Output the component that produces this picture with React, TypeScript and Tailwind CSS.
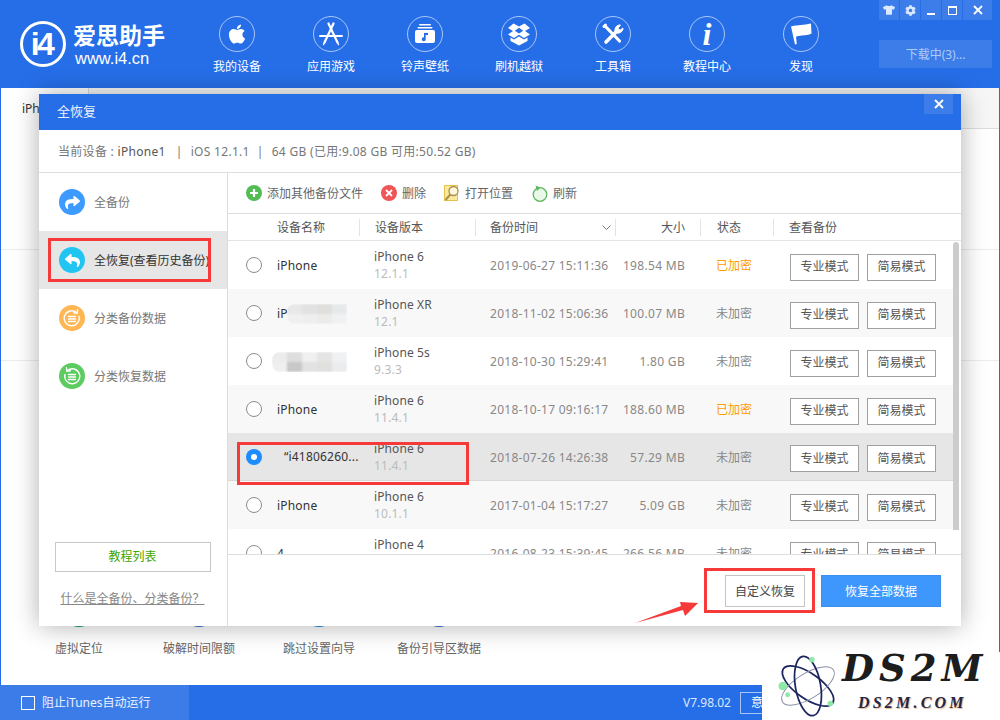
import { FaApple, FaCog, FaReply, FaShare, FaTshirt } from "react-icons/fa";

const font = { fontFamily: '"Noto Sans", "Noto Sans CJK SC", sans-serif' };

const navItems = [
  { label: "我的设备", icon: <FaApple size={22} /> },
  {
    label: "应用游戏",
    icon: (
      <svg width="24" height="24" viewBox="0 0 24 24" stroke="white" fill="none" strokeLinecap="round">
        <path d="M14.500 1.500 5.500 20.500" strokeWidth="2.200" />
        <path d="M9.500 1.500 18.500 20.500" strokeWidth="2.200" />
        <path d="M1 14h22" strokeWidth="2" />
        <path d="M4.500 22.500 5.500 20.500M19.500 22.500 18.500 20.500" strokeWidth="1.400" />
      </svg>
    ),
  },
  {
    label: "铃声壁纸",
    icon: (
      <svg width="22" height="22" viewBox="0 0 22 22" fill="white">
        <rect x="5" y="1" width="12" height="1.600" rx=".8" />
        <rect x="3.500" y="4" width="15" height="1.600" rx=".8" />
        <path d="M3 7h16a2 2 0 0 1 2 2v9a2 2 0 0 1-2 2H3a2 2 0 0 1-2-2V9a2 2 0 0 1 2-2Z" />
        <path d="M10 10h4v2h-2.300v4.200a2 2 0 1 1-1.700-1.900Z" fill="#266ee8" />
      </svg>
    ),
  },
  {
    label: "刷机越狱",
    icon: (
      <svg width="24" height="24" viewBox="0 0 24 24" fill="white">
        <path
          fillRule="evenodd"
          d="M6.500 1.500 12 4.500 17.500 1.500 23 6 18 9 23 12.500 17 16 12 12.800 7 16 1 12.500 6 9 1 6ZM12 5.800 7.800 8.800 12 11.500 16.200 8.800Z"
        />
        <path d="M3.500 15.500 7 17.500 12 14.500 17 17.500 20.500 15.500V19L12 23.500 3.500 19Z" />
      </svg>
    ),
  },
  {
    label: "工具箱",
    icon: (
      <svg width="24" height="24" viewBox="0 0 24 24" fill="none" stroke="white" strokeLinecap="round">
        <path d="M5 5 18.500 19" strokeWidth="3.200" />
        <path d="M3 4.500 4.500 3" strokeWidth="3" />
        <path d="M5 20 15 10" strokeWidth="3.600" />
        <path d="M14.200 9.800A5 5 0 0 1 19.500 3L17 6.200 19 8.300 22 6A5 5 0 0 1 15 10.800" fill="white" strokeWidth="1" />
      </svg>
    ),
  },
  {
    label: "教程中心",
    icon: (
      <span className="text-[32px] leading-none font-bold italic" style={{ fontFamily: '"Liberation Serif", serif' }}>
        i
      </span>
    ),
  },
  {
    label: "发现",
    icon: (
      <svg width="22" height="24" viewBox="0 0 22 24" fill="white">
        <path d="M1 4.500C5 3 8 3.500 11 3c3-.5 6-.5 10-1.500l.5 10c-3 1.500-6 1.800-9.500 2-2.500.2-4.500.5-6 1.200L6.800 22 5 22.500Z" />
      </svg>
    ),
  },
];

const rows = [
  { name: "iPhone", model: "iPhone 6", ios: "12.1.1", time: "2019-06-27 15:11:36", size: "198.54 MB", locked: true, bg: "bg-white" },
  { name: "iP'", blur: "short", model: "iPhone XR", ios: "12.1", time: "2018-11-02 15:06:36", size: "100.07 MB", bg: "bg-[#f8f8f8]" },
  { name: "", blur: "long", model: "iPhone 5s", ios: "9.3.3", time: "2018-10-30 15:29:41", size: "1.80 GB", bg: "bg-white" },
  { name: "iPhone", model: "iPhone 6", ios: "11.4.1", time: "2018-10-17 09:16:17", size: "188.60 MB", locked: true, bg: "bg-[#f8f8f8]" },
  { name: "“i41806260...", model: "iPhone 6", ios: "11.4.1", time: "2018-07-26 14:26:38", size: "57.29 MB", selected: true, bg: "bg-[#e6e6e6] border-b border-[#d8d8d8]" },
  { name: "iPhone", model: "iPhone 6", ios: "10.1.1", time: "2017-01-04 15:17:27", size: "5.09 GB", bg: "bg-[#f8f8f8]" },
  { name: "4", model: "iPhone 4", ios: "7.1.2", time: "2016-08-23 15:39:45", size: "266.56 MB", bg: "bg-white" },
];

const bottomTools = [
  { label: "虚拟定位", color: "bg-[#14a85c]" },
  { label: "破解时间限额", color: "bg-[#4070cc]" },
  { label: "跳过设置向导", color: "bg-[#2a8ee0]" },
  { label: "备份引导区数据", color: "bg-[#3a6fd8]" },
];

function LinesIcon({ reverse }: { reverse?: boolean }) {
  return (
    <svg width="18" height="18" viewBox="0 0 18 18" fill="none" stroke="white" strokeWidth="1.400" strokeLinecap="round">
      {reverse ? <path d="M4.500 3.500A7.500 7.500 0 1 1 2 7.500" /> : <path d="M13.500 3.500A7.500 7.500 0 1 0 16 7.500" />}
      {reverse ? <path d="M3.500 .8 3.800 4.200 7.300 3.800" /> : <path d="M14.500 .8 14.200 4.200 10.700 3.800" />}
      <path d="M5.500 7.500h7M5.500 10h7M5.500 12.500h7" />
    </svg>
  );
}

const sideItems = [
  { label: "全备份", color: "bg-[#3d9bff]", icon: <FaShare size={15} color="white" /> },
  { label: "全恢复(查看历史备份)", color: "bg-[#22c5f2]", icon: <FaReply size={15} color="white" />, active: true },
  { label: "分类备份数据", color: "bg-[#ffb655]", icon: <LinesIcon /> },
  { label: "分类恢复数据", color: "bg-[#5ccb60]", icon: <LinesIcon reverse /> },
];

function Mosaic({ cells }: { cells: string[][] }) {
  return (
    <div className="flex flex-col blur-[1px]">
      {cells.map((line, i) => (
        <div key={i} className="flex">
          {line.map((c, j) => (
            <div key={j} className="w-[15px] h-[10px]" style={{ background: c }} />
          ))}
        </div>
      ))}
    </div>
  );
}

function WindowButton({ children, wide }: { children: React.ReactNode; wide?: boolean }) {
  return <div className={`h-5 flex items-center justify-center bg-white/10 text-white ${wide ? "w-[29px]" : "w-5"}`}>{children}</div>;
}

function Row({ row }: { row: (typeof rows)[number] }) {
  return (
    <div className={`h-12 flex items-center text-xs shrink-0 ${row.bg}`}>
      <div className="w-[49px] flex justify-center pl-[3px]">
        {row.selected ? (
          <div className="w-4 h-4 rounded-full bg-[#1c8cff] flex items-center justify-center">
            <div className="w-[6px] h-[6px] rounded-full bg-white" />
          </div>
        ) : (
          <div className="w-4 h-4 rounded-full border border-[#8c8c8c] bg-white" />
        )}
      </div>
      <div className={`w-[97px] text-[#333] flex items-center pt-px ${row.selected ? "pl-[7px]" : ""}`}>
        <span className="tracking-[0.2px]">{row.name}</span>
        {row.blur === "short" && (
          <div className="-ml-[4px] rounded-l-lg overflow-hidden">
            <Mosaic
              cells={[
                ["#e8e8e8", "#e2e2e2", "#e0dfde", "#e6e9ea"],
                ["#f0f0f0", "#eeeeee", "#ecebea", "#f0f1f3"],
              ]}
            />
          </div>
        )}
        {row.blur === "long" && (
          <div className="-ml-[5px] rounded-l-lg overflow-hidden">
            <Mosaic
              cells={[
                ["#ececec", "#dedede", "#f0f0f0", "#e4e4e4", "#f0f1f2"],
                ["#efefef", "#c8c8c8", "#e2e2e2", "#e2e0de", "#ebeced"],
              ]}
            />
          </div>
        )}
      </div>
      <div className="w-[116px] leading-[17px]">
        <div className="text-[#555] tracking-[0.1px]">{row.model}</div>
        <div className="text-[#bbb] tracking-[0.2px]">{row.ios}</div>
      </div>
      <div className="w-[125px] text-[#888] tracking-[0.27px] pt-[2px]">{row.time}</div>
      <div className="w-[70px] text-right text-[#888] tracking-[0.3px] pt-[2px]">{row.size}</div>
      <div className={`w-[74px] ml-[31px] pt-[2px] ${row.locked ? "text-[#ff9c00]" : "text-[#888]"}`}>{row.locked ? "已加密" : "未加密"}</div>
      <div className="flex gap-2 mt-[4px]">
        <button className="w-[69px] h-[27px] border border-[#a0a0a0] bg-white text-[#555]">专业模式</button>
        <button className="w-[69px] h-[27px] border border-[#a0a0a0] bg-white text-[#555]">简易模式</button>
      </div>
    </div>
  );
}

function HeaderCell({ width, label, sep = true, children }: { width: string; label: string; sep?: boolean; children?: React.ReactNode }) {
  return (
    <div className={`${width} flex items-center h-[17px] ${sep ? "border-r border-[#e4e4e4]" : ""}`}>
      <span className="pt-[2px]">{label}</span>
      {children}
    </div>
  );
}

export default function App() {
  return (
    <div className="relative w-[1000px] h-[720px] overflow-hidden bg-white flex flex-col text-xs" style={font}>
      {/* Header */}
      <header className="h-[88px] bg-[#266ee8] shrink-0 flex text-white relative">
        <div className="w-[189px] pl-5 pt-[21px] flex gap-[7px]">
          <div className="w-[46px] h-[46px] rounded-full border-[3px] border-white flex items-center justify-center overflow-hidden">
            <span className="text-[32px] font-bold leading-none tracking-[-2.500px] pr-[3px]" style={{ fontFamily: '"Liberation Sans", sans-serif' }}>
              i4
            </span>
          </div>
          <div className="flex flex-col pt-[1px]">
            <span className="text-[23px] leading-[27px] font-bold whitespace-nowrap">爱思助手</span>
            <span className="text-[16.500px] leading-[18px] pl-[2px]" style={{ fontFamily: '"Liberation Sans", sans-serif' }}>
              www.i4.cn
            </span>
          </div>
        </div>
        <nav className="flex pl-[1px] pt-[11px] h-[76px]">
          {navItems.map((item) => (
            <div key={item.label} className={`w-[94px] h-[65px] flex flex-col items-center pt-[5px] ${item.active ? "bg-white/10" : ""}`}>
              <div className="w-9 h-9 rounded-full border border-white/60 flex items-center justify-center">{item.icon}</div>
              <div className="mt-[6px] leading-[18px]">{item.label}</div>
            </div>
          ))}
        </nav>
        <div className="ml-auto mr-2 w-[113px] flex flex-col">
          <div className="flex gap-px">
            <WindowButton>
              <FaTshirt size={12} className="text-[#dbe8ff]" />
            </WindowButton>
            <WindowButton>
              <FaCog size={11} className="text-[#dbe8ff]" />
            </WindowButton>
            <WindowButton>
              <div className="w-2 h-[2px] bg-white mt-[7px]" />
            </WindowButton>
            <WindowButton>
              <div className="w-[9px] h-[9px] border border-white border-t-2" />
            </WindowButton>
            <WindowButton wide>
              <svg width="10" height="10" viewBox="0 0 10 10" stroke="white" strokeWidth="1.800">
                <path d="M1 1 9 9M9 1 1 9" />
              </svg>
            </WindowButton>
          </div>
          <div className="mt-5 h-7 bg-white/10 flex items-center justify-center text-white/60 pt-[2px]">下载中(3)...</div>
        </div>
      </header>

      {/* Tool page behind the dialog */}
      <main className="flex-1 flex flex-col border-x border-[#266ee8] min-h-0">
        <div className="h-[41px] bg-[#f6f6f6] border-b border-[#dcdcdc] shrink-0 flex">
          <div className="w-[88px] h-[41px] bg-white border-r border-[#dcdcdc] pl-[21px] pt-[13px] text-[#333]">iPhone</div>
        </div>
        <div className="h-[121px] border-b border-[#ececec] shrink-0" />
        <div className="h-[111px] border-b border-[#ececec] shrink-0" />
        <div className="flex pl-[18px] pt-[234px]">
          {bottomTools.map((tool) => (
            <div key={tool.label} className="w-[120px] flex flex-col items-center text-[#666]">
              <div className={`w-8 h-8 rounded-full ${tool.color}`} />
              <div className="mt-[14px] whitespace-nowrap">{tool.label}</div>
            </div>
          ))}
        </div>
      </main>

      {/* Status bar */}
      <footer className="h-[35px] bg-[#266ee8] shrink-0 flex items-center text-white">
        <div className="w-[189px] h-full bg-[#3b7ce9] flex items-center pl-[21px] gap-[7px]">
          <div className="w-[14px] h-[14px] border border-white" />
          <span className="text-white/90 pt-px">阻止iTunes自动运行</span>
        </div>
        <span className="ml-[494px] text-[#dce8ff] pt-px">V7.98.02</span>
        <div className="ml-[9px] w-[60px] h-[22px] border border-white/60 pl-[10px] leading-[20px] shrink-0">意见反馈</div>
      </footer>

      {/* Dialog */}
      <div className="absolute left-[39px] top-[94px] w-[922px] h-[532px] bg-white flex flex-col shadow-[0_0_24px_rgba(0,0,0,0.32)]">
        <div className="h-9 bg-[#266ee8] shrink-0 flex items-center pl-[18px] text-[#eaf1ff] relative">
          <span className="text-[13px]">全恢复</span>
          <div className="absolute right-2 top-0 w-[29px] h-5 bg-white/10 flex items-center justify-center">
            <svg width="10" height="10" viewBox="0 0 10 10" stroke="white" strokeWidth="1.800">
              <path d="M1 1 9 9M9 1 1 9" />
            </svg>
          </div>
        </div>
        <div className="h-[43px] shrink-0 border-b border-[#dedede] flex items-center pl-[19px] pt-px text-[#777] whitespace-pre tracking-[0.3px]">
          <span>当前设备 : </span>
          <span className="text-[#555]">iPhone1</span>
          <span className="ml-[10px] mr-[8px]">|</span>
          <span>iOS 12.1.1</span>
          <span className="ml-[7px] mr-[8px]">|</span>
          <span>64 GB (已用:9.08 GB 可用:50.52 GB)</span>
        </div>
        <div className="flex-1 flex min-h-0">
          {/* Sidebar */}
          <aside className="w-[189px] shrink-0 border-r border-[#dcdcdc] flex flex-col">
            {sideItems.map((item) => (
              <div key={item.label} className={`h-[58px] flex items-center pl-5 gap-[9px] ${item.active ? "bg-[#e6e6e6] text-[#333]" : "text-[#777]"}`}>
                <div className={`w-[26px] h-[26px] rounded-full flex items-center justify-center shrink-0 ${item.color}`}>{item.icon}</div>
                <span className="whitespace-nowrap pt-[2px]">{item.label}</span>
              </div>
            ))}
            <div className="mt-auto flex flex-col items-center pb-[19px] pr-px">
              <button className="w-[156px] h-[30px] border border-[#c8c8c8] text-[#3fa500]">教程列表</button>
              <a className="mt-[19px] text-[#888] underline">什么是全备份、分类备份？</a>
            </div>
          </aside>

          {/* Backup list */}
          <section className="flex-1 flex flex-col min-w-0">
            <div className="h-[41px] shrink-0 border-b border-[#dedede] flex items-center pl-[18px] text-[#666]">
              <div className="w-4 h-4 rounded-full bg-[#55bb55] flex items-center justify-center mr-[5px]">
                <svg width="10" height="10" viewBox="0 0 10 10" stroke="white" strokeWidth="2.200">
                  <path d="M5 1v8M1 5h8" />
                </svg>
              </div>
              <span className="pt-[2px]">添加其他备份文件</span>
              <div className="w-4 h-4 rounded-full bg-[#f05555] flex items-center justify-center ml-[18px] mr-[5px]">
                <svg width="8" height="8" viewBox="0 0 8 8" stroke="white" strokeWidth="1.800">
                  <path d="M1 1 7 7M7 1 1 7" />
                </svg>
              </div>
              <span className="pt-[2px]">删除</span>
              <svg className="ml-[18px] mr-[5px]" width="16" height="16" viewBox="0 0 16 16">
                <rect x=".5" y=".5" width="13" height="15" fill="#fbe9a0" stroke="#e6c24a" />
                <circle cx="9.500" cy="6" r="4.500" fill="#fff8dc" stroke="#a88f4a" strokeWidth="1.300" />
                <path d="M6.300 9.500 1.500 15" stroke="#a88f4a" strokeWidth="2" />
              </svg>
              <span className="pt-[2px]">打开位置</span>
              <svg className="ml-[19px] mr-[5px]" width="16" height="17" viewBox="0 0 16 17">
                <circle cx="8" cy="9.500" r="6.800" fill="#eaf8ea" stroke="#5cb85c" strokeWidth="1.300" />
                <path d="M3.500 .5 8.500 2.500 5 6Z" fill="#5cb85c" />
              </svg>
              <span className="pt-[2px]">刷新</span>
            </div>

            <div className="h-[27px] shrink-0 border-b border-[#e4e4e4] flex items-center text-[#555]">
              <div className="w-[49px]" />
              <HeaderCell width="w-[83px]" label="设备名称" />
              <div className="w-[15px]" />
              <HeaderCell width="w-[101px]" label="设备版本" />
              <div className="w-[14px]" />
              <HeaderCell width="w-[126px] justify-between pr-[4px]" label="备份时间">
                <svg width="9" height="5" viewBox="0 0 9 5" fill="none" stroke="#777">
                  <path d="M.5 .5 4.500 4.500 8.500 .5" />
                </svg>
              </HeaderCell>
              <HeaderCell width="w-[85px] justify-end pr-[15px]" label="大小" />
              <HeaderCell width="w-[73px] pl-[16px]" label="状态" />
              <div className="pl-[15px] pt-[2px]">查看备份</div>
            </div>

            <div className="flex-1 min-h-0 overflow-hidden relative pr-[8px]">
              <div className="flex flex-col">
                {rows.map((row) => (
                  <Row key={row.time} row={row} />
                ))}
              </div>
              <div className="absolute right-[2px] top-[1px] w-[6px] h-[288px] rounded-t-[3px] bg-[#cccccc]" />
            </div>

            <div className="h-[72px] shrink-0 border-t border-[#dedede] flex justify-end items-start pt-5 pr-5 gap-4">
              <button className="w-20 h-8 border border-[#c4c4c4] text-[#444] pt-px">自定义恢复</button>
              <button className="w-[120px] h-8 bg-[#3d97fd] border border-[#3a8ff0] text-white pt-px">恢复全部数据</button>
            </div>
          </section>
        </div>
      </div>

      {/* Annotations drawn on top of the screenshot */}
      <div className="absolute left-[48px] top-[238px] w-[163px] h-[44px] border-[3px] border-[#f63a3a]" />
      <div className="absolute left-[237px] top-[442px] w-[232px] h-[43px] border-[3px] border-[#f63a3a]" />
      <div className="absolute left-[704px] top-[568px] w-[111px] h-[45px] border-[3px] border-[#f63a3a]" />
      <svg className="absolute left-[630px] top-[595px]" width="72" height="32" viewBox="0 0 72 32">
        <path d="M5 28 51 11 50 7 68 8 55 21 53 15Z" fill="#f63a3a" />
      </svg>

      {/* Watermark */}
      <div className="absolute left-[762px] top-[652px] w-[238px] h-[68px] bg-white overflow-hidden">
        <svg className="absolute left-[14px] top-[2px]" width="64" height="64" viewBox="0 0 66 66" fill="none" stroke="#1c2560" strokeWidth="1.800">
          <ellipse cx="33" cy="33" rx="31" ry="13" transform="rotate(35 33 33)" />
          <ellipse cx="33" cy="33" rx="31" ry="13" transform="rotate(-32 33 33)" strokeWidth="1" stroke="#8a8fa8" />
          <ellipse cx="33" cy="33" rx="31" ry="13" transform="rotate(80 33 33)" />
          <circle cx="7" cy="33" r="4.500" fill="#8fe8a8" stroke="none" />
          <circle cx="37" cy="6" r="2.800" fill="#8fe8a8" stroke="none" />
          <circle cx="12" cy="42" r="2.500" fill="#8fe8a8" stroke="none" />
          <circle cx="56" cy="51" r="2.800" fill="#8fe8a8" stroke="none" />
        </svg>
        <div className="absolute left-[80px] -top-[6px] text-[37px] leading-[44px] font-bold italic tracking-[5px] text-[#1d1d1d] whitespace-nowrap" style={{ fontFamily: '"DejaVu Serif", serif' }}>
          DS2M
        </div>
        <div className="absolute left-[96px] top-[40px] text-[16px] leading-[22px] font-bold italic tracking-[3.200px] text-[#23264a] whitespace-nowrap [text-shadow:1px_1px_1px_#e8b890]" style={{ fontFamily: '"Liberation Serif", serif' }}>
          DS2M.COM
        </div>
      </div>
    </div>
  );
}
